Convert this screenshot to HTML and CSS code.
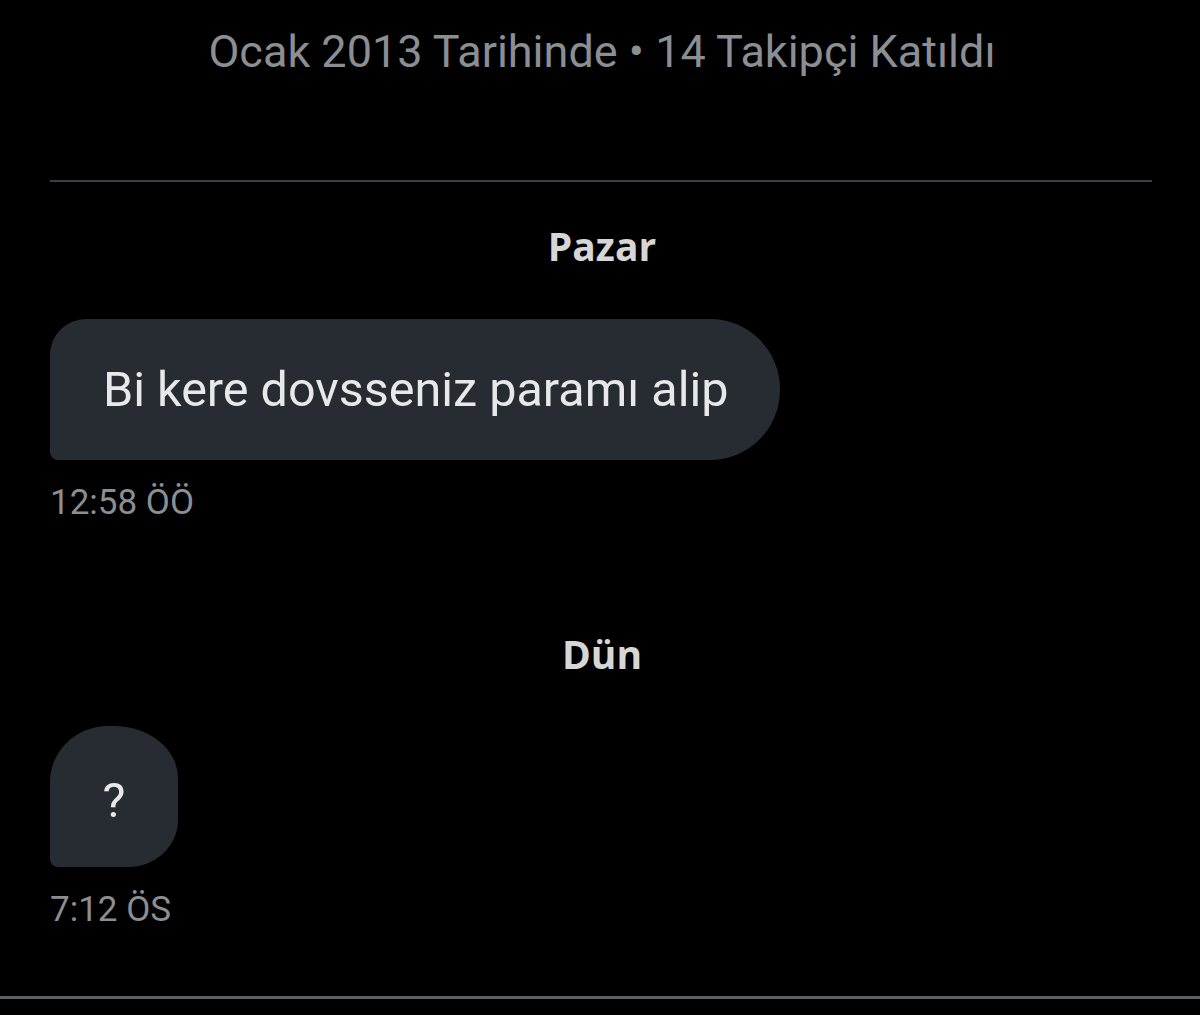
FILE: index.html
```html
<!DOCTYPE html>
<html lang="tr">
<head>
<meta charset="utf-8">
<link rel="stylesheet" href="styles.css">
</head>
<body>
<div class="page">
  <div class="joined">Ocak 2013 Tarihinde • 14 Takipçi Katıldı</div>
  <div class="divider"></div>
  <div class="day">Pazar</div>
  <div class="msg">
    <div class="bubble">Bi kere dovsseniz paramı alip</div>
    <div class="time">12:58 ÖÖ</div>
  </div>
  <div class="day day2">Dün</div>
  <div class="msg">
    <div class="bubble short">?</div>
    <div class="time">7:12 ÖS</div>
  </div>
</div>
<div class="bottom-bar"></div>
</body>
</html>
```
FILE: styles.css
```css
html, body {
  margin: 0;
  padding: 0;
  background: #000;
  height: 100%;
  overflow: hidden;
}
body {
  font-family: Roboto, "Noto Sans", sans-serif;
  display: flex;
  flex-direction: column;
}
.page {
  padding: 0 48px 0 50px;
  display: flex;
  flex-direction: column;
  height: 996px;
}
.joined {
  margin-top: 28px;
  text-align: center;
  color: #8b8e92;
  font-size: 45px;
  line-height: 48px;
  padding-left: 2px;
}
.divider {
  margin-top: 104px;
  height: 2px;
  background: #3b3e42;
}
.day {
  margin-top: 42px;
  text-align: center;
  color: #d6d6d6;
  font-family: "Open Sans", Roboto, sans-serif;
  font-weight: 700;
  font-size: 39px;
  line-height: 44px;
  padding-left: 2px;
}
.day2 {
  margin-top: 109px;
}
.msg {
  display: flex;
  flex-direction: column;
  align-items: flex-start;
}
.bubble {
  margin-top: 51px;
  background: #262c32;
  color: #e6e8e9;
  font-size: 48.5px;
  line-height: 56px;
  height: 141px;
  box-sizing: border-box;
  padding: 0 52px 0 53px;
  display: flex;
  align-items: center;
  border-radius: 36px 70px 70px 8px;
}
.bubble.short {
  margin-top: 50px;
  height: 141px;
  width: 128px;
  padding: 8px 0 0 0;
  justify-content: center;
  border-radius: 58px 64px 50px 8px / 56px 52px 47px 8px;
}
.time {
  margin-top: 23px;
  color: #8b8e92;
  font-size: 35px;
  line-height: 40px;
}
.bottom-bar {
  height: 3px;
  background: #596064;
  flex: none;
}
```
